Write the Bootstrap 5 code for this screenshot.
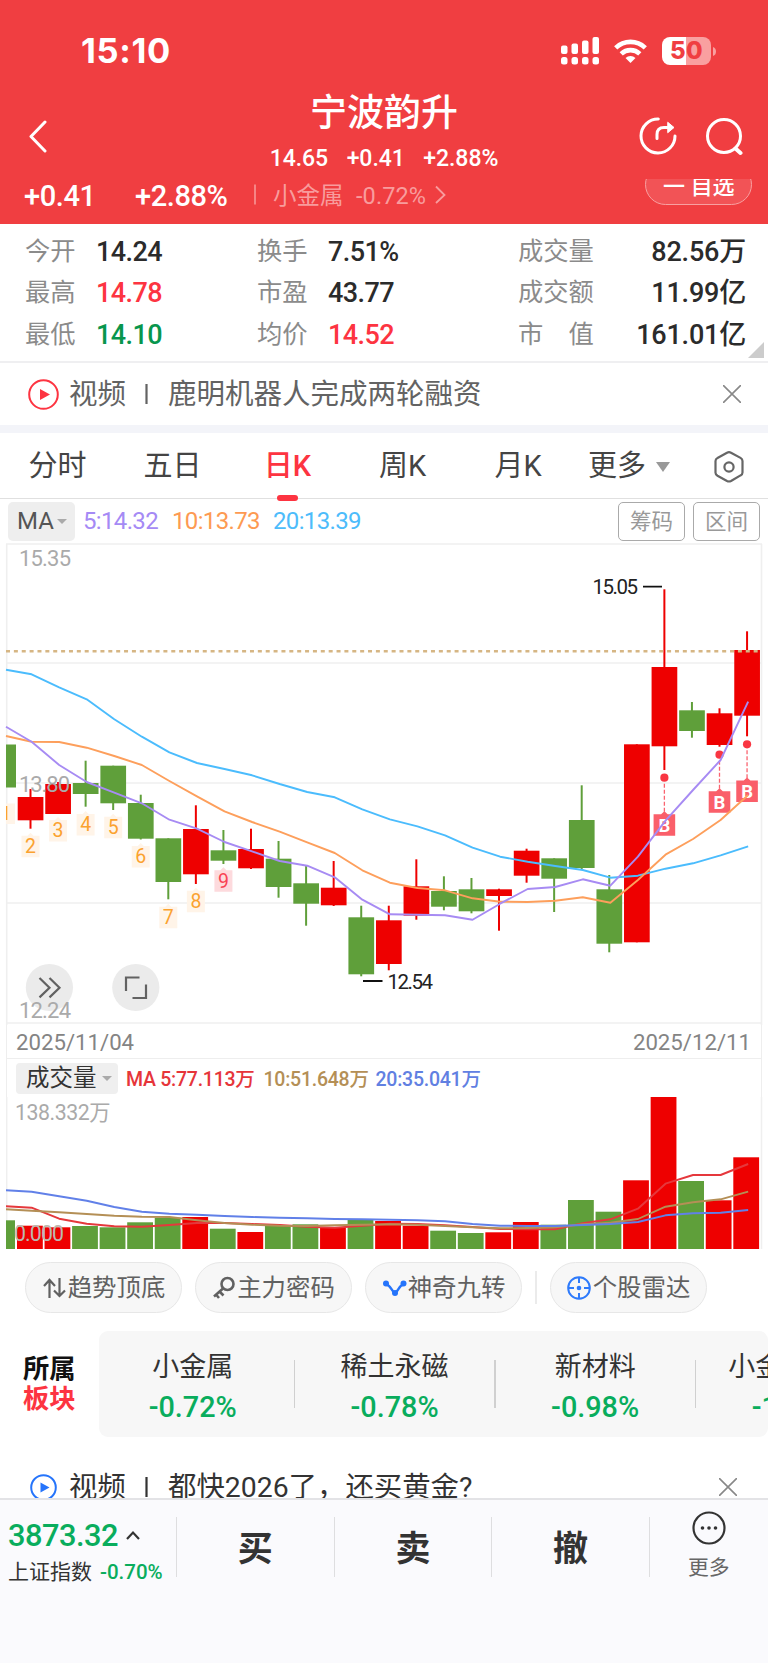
<!DOCTYPE html>
<html lang="zh-CN">
<head>
<meta charset="utf-8">
<meta name="viewport" content="width=device-width, initial-scale=1">
<title>宁波韵升</title>
<link href="https://cdn.jsdelivr.net/npm/bootstrap@5.3.0/dist/css/bootstrap.min.css" rel="stylesheet">
<style>
body{font-family:Roboto,"Noto Sans CJK SC",sans-serif;color:#333;background:#fff;width:768px;height:1663px;overflow:hidden;line-height:1;font-size:25px}
svg{display:block;flex:none}
.app{height:1663px}
.app>*{flex:none}
span,div{white-space:nowrap}
.hdr{background:#f03e41;color:#fff;height:224px}
.statusbar{height:90px;padding:12px 52px 0 81px}
.clock{font:700 34.5px/78px Inter,sans-serif;width:480px;letter-spacing:.7px}
.batt{width:49px;height:28px;border-radius:8px;background:linear-gradient(90deg,#fff 50%,#f9a0a0 50%);color:#f03e41;font:800 24px/28px Inter,sans-serif;text-align:center;letter-spacing:.3px}
.titlebar{height:89px;padding:0 25px 0 28px}
.stock{font-size:37px;line-height:44px;font-weight:500;padding-top:2px}
.sub{font-size:23px;line-height:24px;font-weight:500;letter-spacing:-.05px;gap:18.5px}
.quote{height:45px;overflow:hidden}
.quote .big{font-size:29px;font-weight:500;letter-spacing:-.4px}
.dim{color:#f89c9d;font-size:23.5px}
.fav{width:107px;height:41px;margin-top:-15px;border:1.5px solid #f8a0a1;border-radius:21px;background:#f25356;font-size:22px;font-weight:500;line-height:43px;padding-left:17px}
.stats{height:139px;padding:7px 22px 0 25px;display:grid;grid-template-columns:71px 161px 71px 190px 90px 1fr;grid-auto-rows:41.3px;line-height:41px;border-bottom:2px solid #efeff1}
.stats i{font-style:normal;color:#8b8b8b;font-size:25.3px}
.stats b{font-weight:500;font-size:27px;letter-spacing:-.6px;padding-top:1px;color:#2b2b2b}
.stats b.text-end{letter-spacing:-.2px}
.stats b.r,.r{color:#fd3441}.stats b.g{color:#08964d}
.news{height:62px;padding:0 27px 0 28px;font-size:28.5px;color:#636363}
.news span{padding-top:3px}
.band{height:8px;background:#f3f4f9}
.ktabs{height:66px;border-bottom:1px solid #e0e0e0;font-size:29px;color:#444;display:grid;grid-template-columns:115px 115px 115px 115px 116px 106px 1fr;text-align:center;line-height:67.5px}
.on{color:#fd3441;font-weight:500}
.on u{left:47px;bottom:0;width:21px;height:6px;border-radius:3px;background:#fd3441}
.marow{height:42px;padding:2px 8px 0;font-size:24px;letter-spacing:-.65px}
.marow .sel{width:67px;height:39px;background:#eee;border-radius:5px;color:#555;margin-right:8px;padding-left:9px;letter-spacing:0}
.tool{width:67px;height:39px;border:1.5px solid #aaa;border-radius:5px;color:#999;font-size:21.5px;line-height:37px;text-align:center;letter-spacing:0}
.tri{width:0;height:0;border:5px solid transparent;border-top-color:#aaa;border-bottom:0}
.dates,.volhead{margin:0 6px;border:solid #eee;border-width:0 1.5px}
.dates{height:34px;border-bottom-width:1.5px;font-size:22.2px;line-height:34px;color:#848484;padding:1px 10px 0 9px}
.volhead{height:38px;padding:1px 8px 0 9px;font-size:19.5px;font-weight:500;letter-spacing:-.25px;border-bottom:0}
.volhead span{padding-top:2px}
.volhead .sel{width:102px;height:31px;background:#efefef;border-radius:4px;font-size:23.5px;color:#333;font-weight:400;margin-right:8px;padding-left:10px;letter-spacing:0}
.pills{height:82px;padding:13px 0 0 25px}
.pl{width:157px;height:51px;border:1.5px solid #e7e7e7;border-radius:26px;background:#f7f7f7;color:#616161;font-size:24.4px;line-height:50px}
.sector{height:106px}
.slabel{width:99px;padding-left:23px;font-size:26.3px;line-height:30.5px;font-weight:700;color:#111}
.sbox{width:669px;height:106px;background:#f7f7f7;border-radius:9px;overflow:hidden}
.si{width:200.6px;flex:none;text-align:center;font-size:27px}
.si+.si:before{content:"";float:left;width:1.5px;height:48px;margin-top:29px;background:#d0d0d0}
.si b{display:block;font-weight:500;font-size:28.8px;line-height:38px;color:#09ad5d;letter-spacing:0}
.si em{display:block;font-style:normal;line-height:40px;padding-top:16px;color:#333;height:57px}
.news2{height:61px;overflow:hidden;padding:26px 31px 0 30px;font-size:28.4px;color:#333}
.news2 span{line-height:50px}
.foot{height:166px;background:#fafafd;border-top:2px solid #e3e3e6}
.foot .cell{width:157.6px;height:60px;margin-top:17px;border-left:1.5px solid #dedee0;font-size:35px;font-weight:700;line-height:65px;text-align:center}
.idx{width:176px;padding:16px 0 0 8px}
.gn{color:#09ad5d}
</style>
</head>
<body>
<div class="app d-flex flex-column">
<header class="hdr">
  <div class="statusbar d-flex align-items-center">
    <div class="clock">15:10</div>
    <svg width="39" height="28" fill="#fff"><rect y="8.500" width="6.500" height="8.500" rx="2"/><rect x="10.500" y="6.500" width="6.500" height="10.500" rx="2"/><rect x="21" y="3.500" width="6.500" height="13.500" rx="2"/><rect x="31.500" y="0" width="6.500" height="17" rx="2"/><rect y="20" width="6.500" height="7.500" rx="2.500"/><rect x="10.500" y="20" width="6.500" height="7.500" rx="2.500"/><rect x="21" y="20" width="6.500" height="7.500" rx="2.500"/><rect x="31.500" y="20" width="6.500" height="7.500" rx="2.500"/></svg>
    <svg style="margin-left:14px" width="33" height="25" viewBox="0 0 33 25" fill="none" stroke="#fff" stroke-width="4.600"><path d="M1.700 8.800a21.500 21.500 0 0 1 29.600 0M7.200 14.800a13.500 13.500 0 0 1 18.600 0"/><path d="M11.500 19a7.400 7.400 0 0 1 10 0L16.500 24z" fill="#fff" stroke="none"/></svg>
    <div class="batt ms-auto">50</div>
    <svg style="margin:0 0 0 2px" width="3" height="9"><path d="M0 0q3 1 3 4.500T0 9z" fill="#f9a0a0"/></svg>
  </div>
  <div class="titlebar d-flex justify-content-between position-relative">
    <svg style="margin-top:30px" width="20" height="33" fill="none" stroke="#fff" stroke-width="3" stroke-linecap="round" stroke-linejoin="round"><path d="M17 2 3 16.500 17 31"/></svg>
    <div class="text-center position-absolute start-0 end-0"><div class="stock">宁波韵升</div><div class="sub d-flex justify-content-center" style="margin-top:11px"><span>14.65</span><span>+0.41</span><span>+2.88%</span></div></div>
    <div class="d-flex" style="gap:29px;margin-top:26px"><svg width="38" height="40" overflow="visible" fill="none" stroke="#fff" stroke-width="3" stroke-linecap="round"><path d="M20.300 3a17 17 0 1 0 16.700 17"/><path d="M19 22.500v-4q0-7 7-7h6"/><path d="m30 6.500 6 5-6 5z" fill="#fff" stroke-width="1"/></svg><svg width="38" height="40" fill="none" stroke="#fff" stroke-width="3" stroke-linecap="round"><circle cx="19" cy="20" r="16.500"/><path d="m30.500 32.500 5 4.500" stroke-width="4"/></svg></div>
  </div>
  <div class="quote d-flex" style="line-height:34px;padding:0 16px 0 24px">
    <span class="big" style="width:111px">+0.41</span><span class="big" style="width:119px">+2.88%</span>
    <svg width="19" height="34"><path d="M1 5.500v20" stroke="#f89c9d" stroke-width="1.500"/></svg>
    <span class="dim" style="width:83px">小金属</span><span class="dim" style="width:79px;letter-spacing:.1px">-0.72%</span>
    <svg width="12" height="34" fill="none" stroke="#f89c9d" stroke-width="1.800"><path d="m1 7.500 8.500 8.500L1 24"/></svg>
    <div class="fav ms-auto">一 自选</div>
  </div>
</header>
<section class="stats position-relative">
  <i>今开</i><b>14.24</b><i>换手</i><b>7.51%</b><i>成交量</i><b class="text-end">82.56万</b>
  <i>最高</i><b class="r">14.78</b><i>市盈</i><b>43.77</b><i>成交额</i><b class="text-end">11.99亿</b>
  <i>最低</i><b class="g">14.10</b><i>均价</i><b class="r">14.52</b><i>市　值</i><b class="text-end">161.01亿</b>
  <svg class="position-absolute" style="right:4px;bottom:3px" width="16" height="16"><path d="M16 0v16H0z" fill="#ccc"/></svg>
</section>
<section class="news d-flex align-items-center">
  <svg width="31" height="31" fill="none" stroke="#fd3441" stroke-width="2"><circle cx="15.500" cy="15.500" r="14.300"/><path d="m12 10 10 5.500-10 5.500z" fill="#fd3441" stroke="none"/></svg>
  <span style="margin-left:10px;width:76px">视频</span><svg width="23" height="22"><path d="M1.500 1v20" stroke="#636363" stroke-width="2.200"/></svg><span>鹿明机器人完成两轮融资</span>
  <svg class="ms-auto" width="18" height="18" stroke="#888" stroke-width="1.600"><path d="m0 0 18 18M18 0 0 18"/></svg>
</section>
<div class="band"></div>
<nav class="ktabs"><span>分时</span><span>五日</span><span class="on position-relative">日K<u class="position-absolute"></u></span><span>周K</span><span>月K</span>
  <span class="d-flex align-items-center" style="padding-left:12px">更多<i class="tri" style="border-width:10px 7px 0;border-top-color:#999;margin-left:10px"></i></span>
  <span class="d-flex align-items-center" style="padding-left:32px"><svg width="30" height="32" fill="none" stroke="#666" stroke-width="2.200" stroke-linejoin="round"><path d="M13 1.700q2-1 4 0l9.500 5.200q2 1.200 2 3v11.500q0 2-2 3L17 30q-2 1-4 0l-9.500-5.300q-2-1.200-2-3V10q0-2 2-3z"/><circle cx="15" cy="16" r="4.600"/></svg></span>
</nav>
<div class="marow d-flex align-items-center">
  <div class="sel d-flex align-items-center">MA<i class="tri" style="margin-left:3px"></i></div>
  <span style="width:89px;color:#a58af5">5:14.32</span><span style="width:101px;color:#fd9a52">10:13.73</span><span style="color:#4dbcfb">20:13.39</span>
  <div class="tool ms-auto">筹码</div><div class="tool ms-2">区间</div>
</div>
<svg id="kchart" width="768" height="484" viewBox="0 541 768 484"></svg>
<div class="dates d-flex justify-content-between align-items-center"><span>2025/11/04</span><span>2025/12/11</span></div>
<div class="volhead d-flex align-items-center">
  <div class="sel d-flex align-items-center">成交量<i class="tri" style="margin-left:5px"></i></div>
  <span style="width:137.500px;color:#e6353a">MA 5:77.113万</span><span style="width:112px;color:#b48f56">10:51.648万</span><span style="color:#6180e2">20:35.041万</span>
</div>
<svg id="vchart" width="768" height="152" viewBox="0 1097 768 152" overflow="visible"></svg>
<div class="pills d-flex">
  <div class="pl d-flex align-items-center justify-content-center"><svg width="26" height="24" fill="none" stroke="#616161" stroke-width="2.200"><path d="M7.500 22V4M2 10l5.500-6 5.500 6M17.500 2v18M12 14.500l5.500 5.500 5.500-5.500"/></svg>趋势顶底</div>
  <div class="pl d-flex align-items-center justify-content-center" style="margin-left:13px"><svg width="25" height="24" fill="none" stroke="#616161" stroke-width="2.600"><circle cx="15.500" cy="8" r="6"/><path d="M11 12.500 2 20.500M7.500 15.500l4 4M4 18.500l3 3.500"/></svg>主力密码</div>
  <div class="pl d-flex align-items-center justify-content-center" style="margin-left:13px"><svg width="26" height="24" fill="none" stroke="#2574fb" stroke-width="2.400"><path d="M4 8.500C9 9 9 15 13 17c4-2 4-8 8.500-8.500"/><g fill="#2574fb" stroke="none"><circle cx="4" cy="7.500" r="3"/><circle cx="13" cy="17" r="3"/><circle cx="21.500" cy="7.500" r="3"/></g></svg>神奇九转</div>
  <svg width="28" height="50"><path d="M14 9v33" stroke="#e5e5e5" stroke-width="1.500"/></svg>
  <div class="pl d-flex align-items-center justify-content-center"><svg width="26" height="24" fill="none" stroke="#2f7bfb" stroke-width="2"><circle cx="12" cy="12" r="10.800"/><path d="M12 1v6M12 17v6M1 12h6M17 12h6"/><circle cx="12" cy="12" r="2.300" fill="#2f7bfb" stroke="none"/></svg>个股雷达</div>
</div>
<section class="sector d-flex">
  <div class="slabel d-flex flex-column justify-content-center"><span>所属</span><span class="r">板块</span></div>
  <div class="sbox d-flex"><div class="si" style="width:194.500px;padding-right:7px"><em>小金属</em><b>-0.72%</b></div><div class="si"><em>稀土永磁</em><b>-0.78%</b></div><div class="si"><em>新材料</em><b>-0.98%</b></div><div class="si"><em>小金属概念</em><b>-1.02%</b></div></div>
</section>
<section class="news2 d-flex align-items-start">
  <svg style="margin-top:11px" width="27" height="27" fill="none" stroke="#2574fb" stroke-width="2"><circle cx="13.500" cy="13.500" r="12.300"/><path d="m10.500 8.500 9 5-9 5z" fill="#2574fb" stroke="none"/></svg>
  <span style="margin-left:12px;width:76px">视频</span><svg style="margin-top:13px" width="23" height="22"><path d="M1.500 1v20" stroke="#333" stroke-width="2.200"/></svg><span>都快2026了，还买黄金?</span>
  <svg class="ms-auto" style="margin-top:15px" width="18" height="18" stroke="#888" stroke-width="1.600"><path d="m0 0 18 18M18 0 0 18"/></svg>
</section>
<footer class="foot d-flex">
  <div class="idx"><div class="d-flex align-items-center gn" style="font-size:30.800px;line-height:40px;font-weight:500;letter-spacing:-.500px">3873.32<svg style="margin-left:8px" width="14" height="12" fill="none" stroke="#333" stroke-width="2.200"><path d="m1 9 6-6.500L13 9"/></svg></div>
  <div style="font-size:21px;line-height:32px">上证指数<span class="gn" style="margin-left:8px;font-weight:500;font-size:20.500px">-0.70%</span></div></div>
  <div class="cell">买</div><div class="cell">卖</div><div class="cell">撤</div>
  <div class="cell" style="width:119px;font-size:20.800px;font-weight:400;color:#666;line-height:1"><svg style="margin:-6px auto 13px" width="34" height="34" fill="none" stroke="#333" stroke-width="2.200"><circle cx="17" cy="17" r="15.500"/><g fill="#333" stroke="none"><circle cx="10.500" cy="17" r="1.800"/><circle cx="17" cy="17" r="1.800"/><circle cx="23.500" cy="17" r="1.800"/></g></svg>更多</div>
</footer>
</div>
<script>
const R='#ee0000',G='#5f9f3a',X=i=>30.5+27.56*(i-1);
// colour, body top, body bottom, wick top, wick bottom
const K=[['g',744.5,787.5],['r',797,820.3,789,828.7],['r',784,814,782,814],['g',783,794,760.7,806.7],['g',765.7,803.3,765.7,810],['g',803,838.7,794.7,839.5],['g',838.3,882,838.3,899.3],['r',829,874.3,805.3,884],['g',850.3,860.7,830,864],['r',849,868.3,828.7,869],['g',858.7,887,841,897.7],['g',883.3,903.7,865.7,925.7],['r',887.7,905.3,861,906],['g',917.3,974.3,905.7,976.3],['r',920.3,964,905.7,970.3],['r',886.3,915.7,859.3,919.7],['g',891,906.7,876.3,910.3],['g',889.3,911.3,878,913.3],['r',889.3,896,888.7,930.7],['r',850.7,875.7,848.7,882.7],['g',858.3,878.7,858.3,912],['g',820,868,785.3,869],['g',889.3,943.7,875,952.3],['r',744.3,942.3,744.3,942.3],['r',667,746.3,589.3,770],['g',710.3,731,702,737.7],['r',713.3,745,708.3,746.7],['r',650,715.7,631.3,736.3]];
const line=(a,c)=>`<polyline fill="none" stroke="${c}" stroke-width="1.9" stroke-linejoin="round" points="${a.map((y,i)=>(i?X(i)+1.1:6)+','+y).join(' ')}"/>`;
const T=(x,y,w,s,f,t,e='')=>`<text x="${x}" y="${y}" textLength="${w}" font-size="${s}" fill="${f}" ${e}>${t}</text>`;
let h='<g stroke="#efefef" stroke-width="1.6">'+[544,663,783,903,1023].map(y=>`<path d="M6 ${y}H762"/>`).join('')+'<path d="M6.700 544V1025M761.500 544V1025"/></g>';
h+='<circle cx="49.400" cy="987.500" r="23.600" fill="#ebebeb"/><circle cx="135.800" cy="987.500" r="23.600" fill="#ebebeb"/><g fill="none" stroke="#626262" stroke-width="2.200"><path d="m39.500 978 10 9.700-10 9.700M49.500 978l10 9.700-10 9.700M126 991v-13.500h13.500M146 984.500V998h-13.500"/></g>';
K.forEach((k,i)=>{const c=k[0]=='r'?R:G;h+=i?`<path d="M${X(i)} ${k[3]}V${k[4]}" stroke="${c}" stroke-width="2"/><rect x="${X(i)-12.8}" y="${k[1]}" width="25.700" height="${k[2]-k[1]}" fill="${c}"/>`:`<rect x="6" y="${k[1]}" width="10" height="43" fill="${c}"/>`});
h+='<path d="M6 651.300H761" stroke="#d6b684" stroke-width="2.400" stroke-dasharray="4 3.870"/>';
h+=T(19,565.7,52,22,'#aaa','15.35')+T(19,791.7,51,22,'#aaa','13.80')+T(19,1018,52,22,'#aaa','12.24');
h+='<rect x="6" y="803.500" width="9" height="20.500" fill="#fff4e8"/><path d="M6 806h1.300v14H6z" fill="#fba22f"/>';
[[2,835.7],[3,820],[4,814],[5,816.7],[6,846],[7,906.7],[8,890.7],[9,870.3]].forEach(([n,y])=>{const x=X(n-1);h+=`<path d="M${x-9} ${y}h6l3-3 3 3h6v21.500h-18z" fill="${n==9?'#fddadd':'#fff4e8'}"/><text x="${x}" y="${y+17.2}" text-anchor="middle" font-size="19.5" fill="${n==9?'#f94355':'#fba22f'}">${n}</text>`});
[[24,777.7,814.3],[26,754.7,791.3],[27,744.3,780.5]].forEach(([i,d,y])=>{const x=X(i);h+=`<circle cx="${x}" cy="${d}" r="4.100" fill="#f93642"/><path d="M${x} ${d+6}V${y}" stroke="#fa6470" stroke-width="1.300" stroke-dasharray="4 2"/><path d="M${x-10.8} ${y}h7.500l3.300-3 3.300 3h7.500v21.500h-21.600z" fill="#fa5f6a"/><text x="${x}" y="${y+17.5}" text-anchor="middle" font-size="18.500" font-weight="700" fill="#fff">B</text>`});
h+=line([669.7,674.3,687.3,699.3,719.3,736.7,752.3,763,769,775.3,784,792,797.3,809.3,819.3,826.3,835.3,847.7,856.7,861.7,866,870,877.7,875.7,868.7,863.3,855.3,846.3],'#4bbcfd');
h+=line([736,741.7,742,747.7,756,765,781,796.3,811.3,822,831.7,842.3,853,870.3,882.7,888,890.3,898.3,901.7,902,900.7,897.3,902.7,880,854.7,839,820,795],'#fd9f5c');
h+=line([726.7,741.7,765,782,792.7,803.3,819.7,828.7,842,851.3,861,865.7,877.3,899.7,914.3,914.7,915.3,919.7,903.7,889,887,879.3,885.7,856.7,820.7,790,760,701.7],'#a78bf3');
h+=T(592.500,594.300,45.500,20.5,'#222','15.05')+T(387.500,989.300,45.500,20.5,'#222','12.54')+'<path d="M643 586.700h19M363 981h19.500" stroke="#111" stroke-width="1.800"/>';
kchart.innerHTML=h;
const V=[1220.3,1225.7,1227.3,1226,1227.3,1222.3,1217.7,1217,1228.7,1232,1226,1224.3,1227.3,1219,1221,1225.7,1230.7,1233,1232.3,1222,1224.7,1200,1211.7,1180.3,1097,1181,1200.3,1157.3];
let v='<path d="M6.700 1097v152M761.500 1097v152" stroke="#efefef" stroke-width="1.500"/>';
V.forEach((y,i)=>v+=`<rect x="${i?17+27.55*(i-1):6}" y="${y}" width="${i?25.8:9}" height="${1249-y}" fill="${K[i][0]=='r'?R:G}"/>`);
v+=T(15,1120,95.500,21.300,'#aaa','138.332万')+T(14,1241,50,21.300,'#bdb8b0','0.000');
v+=line([1206.3,1207.7,1218.7,1223.7,1226.3,1226.7,1225,1223,1223,1224,1225,1226.7,1227.7,1225.7,1223.7,1224,1225.3,1227,1229,1229.3,1229.3,1223.3,1219.3,1208.7,1183.7,1175,1175,1164],'#e5383c');
v+=line([1209.3,1210.7,1212.3,1214,1215.7,1216.7,1217,1220.3,1223,1224.7,1225.7,1226,1225.3,1224.7,1224.3,1224.7,1226,1227.3,1228.3,1228,1227.3,1224.3,1222.7,1219,1206.7,1202.3,1199.3,1191.7],'#b48f56');
v+=line([1190.3,1191.7,1196.3,1200.7,1207,1211.7,1213.7,1214.7,1216,1217,1217.7,1218.3,1219,1219.3,1219.7,1220.3,1221.3,1224,1225.7,1226,1226,1225,1224,1222,1215.3,1213.3,1212.7,1210],'#6180e8');
vchart.innerHTML=v;
</script>
<script src="https://cdn.jsdelivr.net/npm/bootstrap@5.3.0/dist/js/bootstrap.bundle.min.js"></script>
</body>
</html>
